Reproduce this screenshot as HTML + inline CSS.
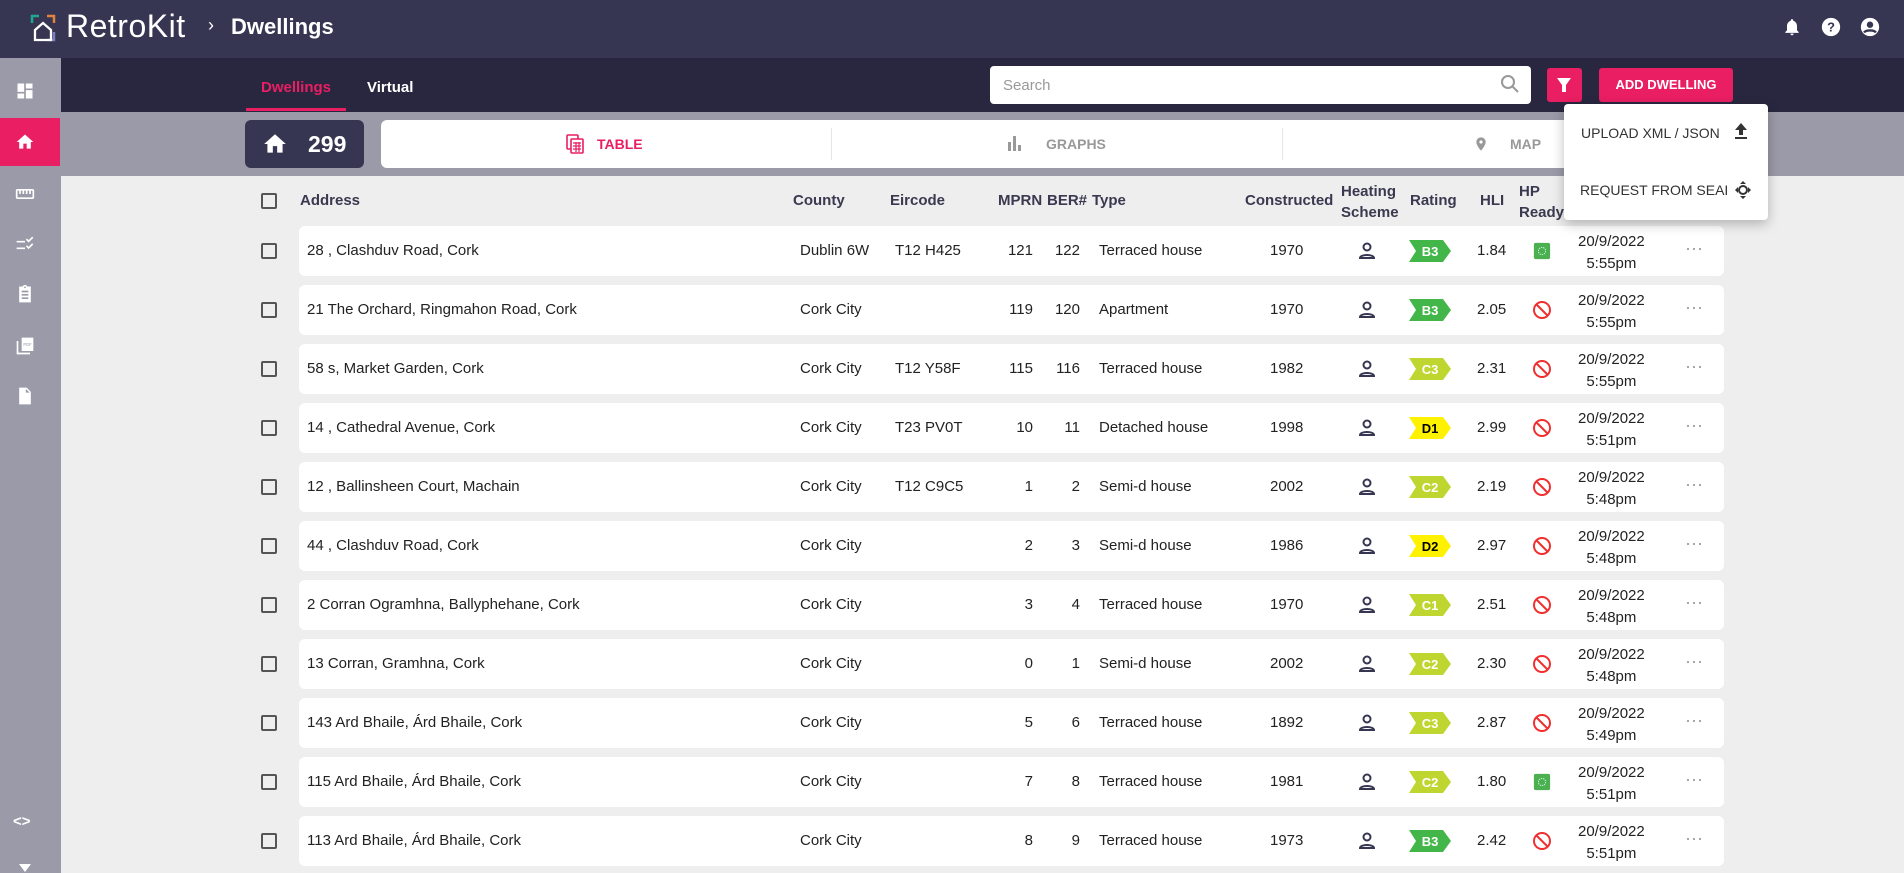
<!DOCTYPE html>
<html><head><meta charset="utf-8"><style>
*{box-sizing:border-box;margin:0;padding:0}
body{width:1904px;height:873px;overflow:hidden;background:#eeeeee;font-family:"Liberation Sans",sans-serif;position:relative;color:#222}
.abs{position:absolute}
.top{left:0;top:0;width:1904px;height:58px;background:#363552}
.tabbar{left:61px;top:58px;width:1843px;height:54px;background:#28273f}
.band{left:61px;top:112px;width:1843px;height:64px;background:#9b9aa8}
.side{left:0;top:58px;width:61px;height:815px;background:#9b9aa8}
.row{position:absolute;left:299px;width:1425px;height:50px;background:#fff;border-radius:6px}
.c{position:absolute;font-size:15px;color:#222;white-space:nowrap}
.cb{position:absolute;left:261px;width:16px;height:16px;border:2px solid #555;border-radius:2px}
.h{position:absolute;top:192px;font-size:15px;font-weight:bold;color:#3a3950}
.h2{position:absolute;top:181px;font-size:15px;font-weight:bold;color:#3a3950;line-height:21px}
.si{position:absolute;left:14px;width:22px;height:20px}
</style></head><body>
<div class="abs top"></div>
<!-- logo -->
<svg class="abs" style="left:30px;top:14px" width="26" height="28" viewBox="0 0 26 28"><path d="M2 9V2h7" stroke="#1fa88f" stroke-width="2.5" fill="none"/><path d="M17 2h7v7" stroke="#e0833e" stroke-width="2.5" fill="none"/><path d="M24 18v8h-7" stroke="#7b7fc1" stroke-width="2.5" fill="none"/><path d="M5 26V16l8-7 8 7v10z" stroke="#fff" stroke-width="2.3" fill="none"/></svg>
<div class="abs" style="left:66px;top:8px;color:#fff;font-size:32px;letter-spacing:0.5px">RetroKit</div>
<div class="abs" style="left:208px;top:15px;color:#fff;font-size:18px">›</div>
<div class="abs" style="left:231px;top:14px;color:#fff;font-size:22px;font-weight:bold">Dwellings</div>
<!-- top right icons -->
<svg class="abs" style="left:1782px;top:16px" width="20" height="22" viewBox="0 0 24 24"><path fill="#fff" d="M12 22c1.1 0 2-.9 2-2h-4c0 1.1.9 2 2 2zm6-6v-5c0-3.07-1.64-5.64-4.5-6.32V4c0-.83-.67-1.5-1.5-1.5s-1.5.67-1.5 1.5v.68C7.63 5.36 6 7.92 6 11v5l-2 2v1h16v-1l-2-2z"/></svg>
<svg class="abs" style="left:1820px;top:16px" width="22" height="22" viewBox="0 0 24 24"><circle cx="12" cy="12" r="10" fill="#fff"/><text x="12" y="17" text-anchor="middle" font-size="14" font-weight="bold" fill="#363552" font-family="Liberation Sans">?</text></svg>
<svg class="abs" style="left:1859px;top:16px" width="22" height="22" viewBox="0 0 24 24"><circle cx="12" cy="12" r="10" fill="#fff"/><circle cx="12" cy="9.5" r="3.5" fill="#363552"/><path d="M5.5 18c2-3 11-3 13 0" stroke="#363552" stroke-width="2.5" fill="none"/></svg>

<div class="abs tabbar"></div>
<div class="abs" style="left:261px;top:79px;color:#e91e63;font-size:15px;font-weight:bold">Dwellings</div>
<div class="abs" style="left:246px;top:108px;width:100px;height:3px;background:#e91e63"></div>
<div class="abs" style="left:367px;top:79px;color:#fff;font-size:15px;font-weight:bold">Virtual</div>
<div class="abs" style="left:990px;top:66px;width:541px;height:38px;background:#fff;border-radius:4px"></div>
<div class="abs" style="left:1003px;top:77px;color:#999;font-size:15px">Search</div>
<svg class="abs" style="left:1500px;top:74px" width="20" height="20" viewBox="0 0 20 20"><circle cx="8" cy="8" r="6" stroke="#999" stroke-width="2" fill="none"/><path d="M12.5 12.5l5.5 5.5" stroke="#999" stroke-width="2"/></svg>
<div class="abs" style="left:1547px;top:68px;width:35px;height:34px;background:#e91e63;border-radius:3px"></div>
<svg class="abs" style="left:1555px;top:76px" width="18" height="18" viewBox="0 0 18 18"><path d="M2 2h14l-5 7v7h-4V9z" fill="#fff"/></svg>
<div class="abs" style="left:1599px;top:68px;width:134px;height:34px;background:#e91e63;border-radius:3px;color:#fff;font-size:13px;font-weight:bold;text-align:center;line-height:34px">ADD DWELLING</div>

<div class="abs side"></div>
<div class="abs" style="left:0;top:118px;width:60px;height:48px;background:#e91e63"></div>
<svg class="si" style="top:81px" viewBox="0 0 24 24"><path fill="#fff" d="M3 13h8V3H3zm0 8h8v-6H3zm10 0h8V11h-8zm0-18v6h8V3z"/></svg>
<svg class="si" style="top:132px" viewBox="0 0 24 24"><path fill="#fff" d="M10 20v-6h4v6h5v-8h3L12 3 2 12h3v8z"/></svg>
<svg class="si" style="top:184px" viewBox="0 0 24 24"><path fill="#fff" d="M21 6H3c-1.1 0-2 .9-2 2v8c0 1.1.9 2 2 2h18c1.1 0 2-.9 2-2V8c0-1.1-.9-2-2-2zm0 10H3V8h2v4h2V8h2v4h2V8h2v4h2V8h2v4h2V8h2v8z"/></svg>
<svg class="si" style="top:235px" viewBox="0 0 24 24"><path fill="#fff" d="M2 7h10v2H2zm0 8h10v2H2zm14.34-6L13 5.66l1.41-1.41 1.93 1.93L20.59 2 22 3.41zm0 8L13 13.66l1.41-1.41 1.93 1.93 4.25-4.24L22 11.41z"/></svg>
<svg class="si" style="top:284px" viewBox="0 0 24 24"><path fill="#fff" d="M19 3h-4.18C14.4 1.84 13.3 1 12 1s-2.4.84-2.82 2H5v19h14zm-7 0c.55 0 1 .45 1 1s-.45 1-1 1-1-.45-1-1 .45-1 1-1zm4 15H8v-2h8zm0-4H8v-2h8zm0-4H8V8h8z"/></svg>
<svg class="si" style="top:336px" viewBox="0 0 24 24"><path fill="#fff" d="M20 2H8v16h14V2zM4 6H2v16h16v-2H4z"/><text x="15" y="12" font-size="5" fill="#9b9aa8" text-anchor="middle" font-family="Liberation Sans">PDF</text></svg>
<svg class="si" style="top:386px" viewBox="0 0 24 24"><path fill="#fff" d="M14 2H5v20h14V7zm-1 6V3.5L17.5 8z"/></svg>
<div class="abs" style="left:13px;top:813px;color:#fff;font-size:15px;font-weight:bold">&lt;&gt;</div>
<div class="abs" style="left:19px;top:864px;width:0;height:0;border-left:6px solid transparent;border-right:6px solid transparent;border-top:8px solid #fff"></div>

<div class="abs band"></div>
<div class="abs" style="left:245px;top:120px;width:119px;height:48px;background:#363552;border-radius:6px"></div>
<svg class="abs" style="left:262px;top:131px" width="26" height="26" viewBox="0 0 24 24"><path fill="#fff" d="M10 20v-6h4v6h5v-8h3L12 3 2 12h3v8z"/></svg>
<div class="abs" style="left:308px;top:131px;color:#fff;font-size:23px;font-weight:bold">299</div>
<div class="abs" style="left:381px;top:120px;width:1352px;height:48px;background:#fff;border-radius:6px"></div>
<div class="abs" style="left:831px;top:128px;width:1px;height:32px;background:#e6e6e6"></div>
<div class="abs" style="left:1282px;top:128px;width:1px;height:32px;background:#e6e6e6"></div>
<svg class="abs" style="left:565px;top:134px" width="20" height="20" viewBox="0 0 20 20"><rect x="2" y="1" width="11" height="14" rx="1" fill="none" stroke="#e91e63" stroke-width="1.6"/><rect x="6" y="5" width="12" height="14" rx="1" fill="#fff" stroke="#e91e63" stroke-width="1.6"/><path d="M8 9h8M8 12h8M8 15h8M11 8v10M14 8v10" stroke="#e91e63" stroke-width="1.2"/></svg>
<div class="abs" style="left:597px;top:136px;color:#e91e63;font-size:14px;font-weight:bold">TABLE</div>
<svg class="abs" style="left:1006px;top:134px" width="18" height="18" viewBox="0 0 18 18"><path fill="#999" d="M2 8h3v9H2zm5-6h3v15H7zm5 9h3v6h-3z"/></svg>
<div class="abs" style="left:1046px;top:136px;color:#999;font-size:14px;font-weight:bold">GRAPHS</div>
<svg class="abs" style="left:1473px;top:133px" width="16" height="22" viewBox="0 0 24 24"><path fill="#999" d="M12 2C8.13 2 5 5.13 5 9c0 5.25 7 13 7 13s7-7.75 7-13c0-3.87-3.13-7-7-7zm0 9.5c-1.38 0-2.5-1.12-2.5-2.5s1.12-2.5 2.5-2.5 2.5 1.12 2.5 2.5-1.12 2.5-2.5 2.5z"/></svg>
<div class="abs" style="left:1510px;top:136px;color:#999;font-size:14px;font-weight:bold">MAP</div>

<!-- header -->
<div class="cb" style="top:193px"></div>
<div class="h" style="left:300px">Address</div>
<div class="h" style="left:793px">County</div>
<div class="h" style="left:890px">Eircode</div>
<div class="h" style="left:998px">MPRN</div>
<div class="h" style="left:1047px">BER#</div>
<div class="h" style="left:1092px">Type</div>
<div class="h" style="left:1245px">Constructed</div>
<div class="h2" style="left:1341px">Heating<br>Scheme</div>
<div class="h" style="left:1410px">Rating</div>
<div class="h" style="left:1480px">HLI</div>
<div class="h2" style="left:1519px">HP<br>Ready</div>

<svg width="0" height="0" style="position:absolute"><defs>
<symbol id="p" viewBox="0 0 20 20"><circle cx="10" cy="6" r="3.5" fill="none" stroke="#363552" stroke-width="2"/><path d="M3 17c0-4 14-4 14 0z" fill="none" stroke="#363552" stroke-width="2"/></symbol>
<symbol id="no" viewBox="0 0 20 20"><circle cx="10" cy="10" r="8" fill="none" stroke="#f03030" stroke-width="2"/><path d="M4.5 4.5l11 11" stroke="#f03030" stroke-width="2"/></symbol>
<symbol id="ok" viewBox="0 0 20 20"><rect x="1" y="1" width="18" height="18" rx="2" fill="#4caf50"/><circle cx="10" cy="10" r="4" fill="none" stroke="#cfe" stroke-width="1" stroke-dasharray="1.5 1"/></symbol>
<symbol id="bd" viewBox="0 0 42 22"><polygon points="0,0 34,0 42,11 34,22 0,22 7,11"/></symbol>
</defs></svg>

<div id="rows"></div>
<!-- ROWS -->
<div class="row" style="top:226px"></div><div class="cb" style="top:243px"></div>
<div class="c" style="left:307px;top:242px">28 , Clashduv Road, Cork</div><div class="c" style="left:800px;top:242px">Dublin 6W</div><div class="c" style="left:895px;top:242px">T12 H425</div><div class="c" style="left:983px;width:50px;text-align:right;top:242px">121</div><div class="c" style="left:1030px;width:50px;text-align:right;top:242px">122</div><div class="c" style="left:1099px;top:242px">Terraced house</div><div class="c" style="left:1270px;top:242px">1970</div>
<svg class="abs" style="left:1357px;top:241px" width="20" height="20"><use href="#p"/></svg>
<svg class="abs" style="left:1409px;top:240px" width="42" height="22" fill="#43b649"><use href="#bd"/><text x="21" y="16" text-anchor="middle" fill="#fff" font-weight="bold" font-size="13" font-family="Liberation Sans">B3</text></svg>
<div class="c" style="left:1477px;top:242px">1.84</div><svg class="abs" style="left:1533px;top:242px" width="18" height="18"><use href="#ok"/></svg>
<div class="c" style="left:1578px;top:231px;text-align:center;line-height:22px">20/9/2022<br>5:55pm</div><div class="c" style="left:1685px;top:238px;color:#999;font-size:18px">···</div>

<div class="row" style="top:285px"></div><div class="cb" style="top:302px"></div>
<div class="c" style="left:307px;top:301px">21 The Orchard, Ringmahon Road, Cork</div><div class="c" style="left:800px;top:301px">Cork City</div><div class="c" style="left:983px;width:50px;text-align:right;top:301px">119</div><div class="c" style="left:1030px;width:50px;text-align:right;top:301px">120</div><div class="c" style="left:1099px;top:301px">Apartment</div><div class="c" style="left:1270px;top:301px">1970</div>
<svg class="abs" style="left:1357px;top:300px" width="20" height="20"><use href="#p"/></svg>
<svg class="abs" style="left:1409px;top:299px" width="42" height="22" fill="#43b649"><use href="#bd"/><text x="21" y="16" text-anchor="middle" fill="#fff" font-weight="bold" font-size="13" font-family="Liberation Sans">B3</text></svg>
<div class="c" style="left:1477px;top:301px">2.05</div><svg class="abs" style="left:1532px;top:300px" width="20" height="20"><use href="#no"/></svg>
<div class="c" style="left:1578px;top:290px;text-align:center;line-height:22px">20/9/2022<br>5:55pm</div><div class="c" style="left:1685px;top:297px;color:#999;font-size:18px">···</div>

<div class="row" style="top:344px"></div><div class="cb" style="top:361px"></div>
<div class="c" style="left:307px;top:360px">58 s, Market Garden, Cork</div><div class="c" style="left:800px;top:360px">Cork City</div><div class="c" style="left:895px;top:360px">T12 Y58F</div><div class="c" style="left:983px;width:50px;text-align:right;top:360px">115</div><div class="c" style="left:1030px;width:50px;text-align:right;top:360px">116</div><div class="c" style="left:1099px;top:360px">Terraced house</div><div class="c" style="left:1270px;top:360px">1982</div>
<svg class="abs" style="left:1357px;top:359px" width="20" height="20"><use href="#p"/></svg>
<svg class="abs" style="left:1409px;top:358px" width="42" height="22" fill="#bfd630"><use href="#bd"/><text x="21" y="16" text-anchor="middle" fill="#fff" font-weight="bold" font-size="13" font-family="Liberation Sans">C3</text></svg>
<div class="c" style="left:1477px;top:360px">2.31</div><svg class="abs" style="left:1532px;top:359px" width="20" height="20"><use href="#no"/></svg>
<div class="c" style="left:1578px;top:349px;text-align:center;line-height:22px">20/9/2022<br>5:55pm</div><div class="c" style="left:1685px;top:356px;color:#999;font-size:18px">···</div>

<div class="row" style="top:403px"></div><div class="cb" style="top:420px"></div>
<div class="c" style="left:307px;top:419px">14 , Cathedral Avenue, Cork</div><div class="c" style="left:800px;top:419px">Cork City</div><div class="c" style="left:895px;top:419px">T23 PV0T</div><div class="c" style="left:983px;width:50px;text-align:right;top:419px">10</div><div class="c" style="left:1030px;width:50px;text-align:right;top:419px">11</div><div class="c" style="left:1099px;top:419px">Detached house</div><div class="c" style="left:1270px;top:419px">1998</div>
<svg class="abs" style="left:1357px;top:418px" width="20" height="20"><use href="#p"/></svg>
<svg class="abs" style="left:1409px;top:417px" width="42" height="22" fill="#fff200"><use href="#bd"/><text x="21" y="16" text-anchor="middle" fill="#000" font-weight="bold" font-size="13" font-family="Liberation Sans">D1</text></svg>
<div class="c" style="left:1477px;top:419px">2.99</div><svg class="abs" style="left:1532px;top:418px" width="20" height="20"><use href="#no"/></svg>
<div class="c" style="left:1578px;top:408px;text-align:center;line-height:22px">20/9/2022<br>5:51pm</div><div class="c" style="left:1685px;top:415px;color:#999;font-size:18px">···</div>

<div class="row" style="top:462px"></div><div class="cb" style="top:479px"></div>
<div class="c" style="left:307px;top:478px">12 , Ballinsheen Court, Machain</div><div class="c" style="left:800px;top:478px">Cork City</div><div class="c" style="left:895px;top:478px">T12 C9C5</div><div class="c" style="left:983px;width:50px;text-align:right;top:478px">1</div><div class="c" style="left:1030px;width:50px;text-align:right;top:478px">2</div><div class="c" style="left:1099px;top:478px">Semi-d house</div><div class="c" style="left:1270px;top:478px">2002</div>
<svg class="abs" style="left:1357px;top:477px" width="20" height="20"><use href="#p"/></svg>
<svg class="abs" style="left:1409px;top:476px" width="42" height="22" fill="#bfd630"><use href="#bd"/><text x="21" y="16" text-anchor="middle" fill="#fff" font-weight="bold" font-size="13" font-family="Liberation Sans">C2</text></svg>
<div class="c" style="left:1477px;top:478px">2.19</div><svg class="abs" style="left:1532px;top:477px" width="20" height="20"><use href="#no"/></svg>
<div class="c" style="left:1578px;top:467px;text-align:center;line-height:22px">20/9/2022<br>5:48pm</div><div class="c" style="left:1685px;top:474px;color:#999;font-size:18px">···</div>

<div class="row" style="top:521px"></div><div class="cb" style="top:538px"></div>
<div class="c" style="left:307px;top:537px">44 , Clashduv Road, Cork</div><div class="c" style="left:800px;top:537px">Cork City</div><div class="c" style="left:983px;width:50px;text-align:right;top:537px">2</div><div class="c" style="left:1030px;width:50px;text-align:right;top:537px">3</div><div class="c" style="left:1099px;top:537px">Semi-d house</div><div class="c" style="left:1270px;top:537px">1986</div>
<svg class="abs" style="left:1357px;top:536px" width="20" height="20"><use href="#p"/></svg>
<svg class="abs" style="left:1409px;top:535px" width="42" height="22" fill="#fff200"><use href="#bd"/><text x="21" y="16" text-anchor="middle" fill="#000" font-weight="bold" font-size="13" font-family="Liberation Sans">D2</text></svg>
<div class="c" style="left:1477px;top:537px">2.97</div><svg class="abs" style="left:1532px;top:536px" width="20" height="20"><use href="#no"/></svg>
<div class="c" style="left:1578px;top:526px;text-align:center;line-height:22px">20/9/2022<br>5:48pm</div><div class="c" style="left:1685px;top:533px;color:#999;font-size:18px">···</div>

<div class="row" style="top:580px"></div><div class="cb" style="top:597px"></div>
<div class="c" style="left:307px;top:596px">2 Corran Ogramhna, Ballyphehane, Cork</div><div class="c" style="left:800px;top:596px">Cork City</div><div class="c" style="left:983px;width:50px;text-align:right;top:596px">3</div><div class="c" style="left:1030px;width:50px;text-align:right;top:596px">4</div><div class="c" style="left:1099px;top:596px">Terraced house</div><div class="c" style="left:1270px;top:596px">1970</div>
<svg class="abs" style="left:1357px;top:595px" width="20" height="20"><use href="#p"/></svg>
<svg class="abs" style="left:1409px;top:594px" width="42" height="22" fill="#bfd630"><use href="#bd"/><text x="21" y="16" text-anchor="middle" fill="#fff" font-weight="bold" font-size="13" font-family="Liberation Sans">C1</text></svg>
<div class="c" style="left:1477px;top:596px">2.51</div><svg class="abs" style="left:1532px;top:595px" width="20" height="20"><use href="#no"/></svg>
<div class="c" style="left:1578px;top:585px;text-align:center;line-height:22px">20/9/2022<br>5:48pm</div><div class="c" style="left:1685px;top:592px;color:#999;font-size:18px">···</div>

<div class="row" style="top:639px"></div><div class="cb" style="top:656px"></div>
<div class="c" style="left:307px;top:655px">13 Corran, Gramhna, Cork</div><div class="c" style="left:800px;top:655px">Cork City</div><div class="c" style="left:983px;width:50px;text-align:right;top:655px">0</div><div class="c" style="left:1030px;width:50px;text-align:right;top:655px">1</div><div class="c" style="left:1099px;top:655px">Semi-d house</div><div class="c" style="left:1270px;top:655px">2002</div>
<svg class="abs" style="left:1357px;top:654px" width="20" height="20"><use href="#p"/></svg>
<svg class="abs" style="left:1409px;top:653px" width="42" height="22" fill="#bfd630"><use href="#bd"/><text x="21" y="16" text-anchor="middle" fill="#fff" font-weight="bold" font-size="13" font-family="Liberation Sans">C2</text></svg>
<div class="c" style="left:1477px;top:655px">2.30</div><svg class="abs" style="left:1532px;top:654px" width="20" height="20"><use href="#no"/></svg>
<div class="c" style="left:1578px;top:644px;text-align:center;line-height:22px">20/9/2022<br>5:48pm</div><div class="c" style="left:1685px;top:651px;color:#999;font-size:18px">···</div>

<div class="row" style="top:698px"></div><div class="cb" style="top:715px"></div>
<div class="c" style="left:307px;top:714px">143 Ard Bhaile, Árd Bhaile, Cork</div><div class="c" style="left:800px;top:714px">Cork City</div><div class="c" style="left:983px;width:50px;text-align:right;top:714px">5</div><div class="c" style="left:1030px;width:50px;text-align:right;top:714px">6</div><div class="c" style="left:1099px;top:714px">Terraced house</div><div class="c" style="left:1270px;top:714px">1892</div>
<svg class="abs" style="left:1357px;top:713px" width="20" height="20"><use href="#p"/></svg>
<svg class="abs" style="left:1409px;top:712px" width="42" height="22" fill="#bfd630"><use href="#bd"/><text x="21" y="16" text-anchor="middle" fill="#fff" font-weight="bold" font-size="13" font-family="Liberation Sans">C3</text></svg>
<div class="c" style="left:1477px;top:714px">2.87</div><svg class="abs" style="left:1532px;top:713px" width="20" height="20"><use href="#no"/></svg>
<div class="c" style="left:1578px;top:703px;text-align:center;line-height:22px">20/9/2022<br>5:49pm</div><div class="c" style="left:1685px;top:710px;color:#999;font-size:18px">···</div>

<div class="row" style="top:757px"></div><div class="cb" style="top:774px"></div>
<div class="c" style="left:307px;top:773px">115 Ard Bhaile, Árd Bhaile, Cork</div><div class="c" style="left:800px;top:773px">Cork City</div><div class="c" style="left:983px;width:50px;text-align:right;top:773px">7</div><div class="c" style="left:1030px;width:50px;text-align:right;top:773px">8</div><div class="c" style="left:1099px;top:773px">Terraced house</div><div class="c" style="left:1270px;top:773px">1981</div>
<svg class="abs" style="left:1357px;top:772px" width="20" height="20"><use href="#p"/></svg>
<svg class="abs" style="left:1409px;top:771px" width="42" height="22" fill="#bfd630"><use href="#bd"/><text x="21" y="16" text-anchor="middle" fill="#fff" font-weight="bold" font-size="13" font-family="Liberation Sans">C2</text></svg>
<div class="c" style="left:1477px;top:773px">1.80</div><svg class="abs" style="left:1533px;top:773px" width="18" height="18"><use href="#ok"/></svg>
<div class="c" style="left:1578px;top:762px;text-align:center;line-height:22px">20/9/2022<br>5:51pm</div><div class="c" style="left:1685px;top:769px;color:#999;font-size:18px">···</div>

<div class="row" style="top:816px"></div><div class="cb" style="top:833px"></div>
<div class="c" style="left:307px;top:832px">113 Ard Bhaile, Árd Bhaile, Cork</div><div class="c" style="left:800px;top:832px">Cork City</div><div class="c" style="left:983px;width:50px;text-align:right;top:832px">8</div><div class="c" style="left:1030px;width:50px;text-align:right;top:832px">9</div><div class="c" style="left:1099px;top:832px">Terraced house</div><div class="c" style="left:1270px;top:832px">1973</div>
<svg class="abs" style="left:1357px;top:831px" width="20" height="20"><use href="#p"/></svg>
<svg class="abs" style="left:1409px;top:830px" width="42" height="22" fill="#43b649"><use href="#bd"/><text x="21" y="16" text-anchor="middle" fill="#fff" font-weight="bold" font-size="13" font-family="Liberation Sans">B3</text></svg>
<div class="c" style="left:1477px;top:832px">2.42</div><svg class="abs" style="left:1532px;top:831px" width="20" height="20"><use href="#no"/></svg>
<div class="c" style="left:1578px;top:821px;text-align:center;line-height:22px">20/9/2022<br>5:51pm</div><div class="c" style="left:1685px;top:828px;color:#999;font-size:18px">···</div>

<!-- dropdown -->
<div class="abs" style="left:1564px;top:104px;width:204px;height:116px;background:#fff;border-radius:4px;box-shadow:0 4px 12px rgba(0,0,0,.25)"></div>
<div class="abs" style="left:1581px;top:125px;font-size:14px;color:#333">UPLOAD XML / JSON</div>
<svg class="abs" style="left:1733px;top:122px" width="16" height="18" viewBox="0 0 16 18"><path d="M8 1l6 7h-4v5H6V8H2z" fill="#333"/><rect x="2" y="15" width="12" height="2" fill="#333"/></svg>
<div class="abs" style="left:1580px;top:182px;font-size:14px;color:#333">REQUEST FROM SEAI</div>
<svg class="abs" style="left:1734px;top:180px" width="18" height="20" viewBox="0 0 18 20"><path d="M9 1l3 3H6zM9 19l-3-3h6zM1 10l3-3v6zM17 10l-3 3V7z" fill="#333"/><circle cx="9" cy="10" r="4" fill="none" stroke="#333" stroke-width="2"/></svg>
</body></html>
